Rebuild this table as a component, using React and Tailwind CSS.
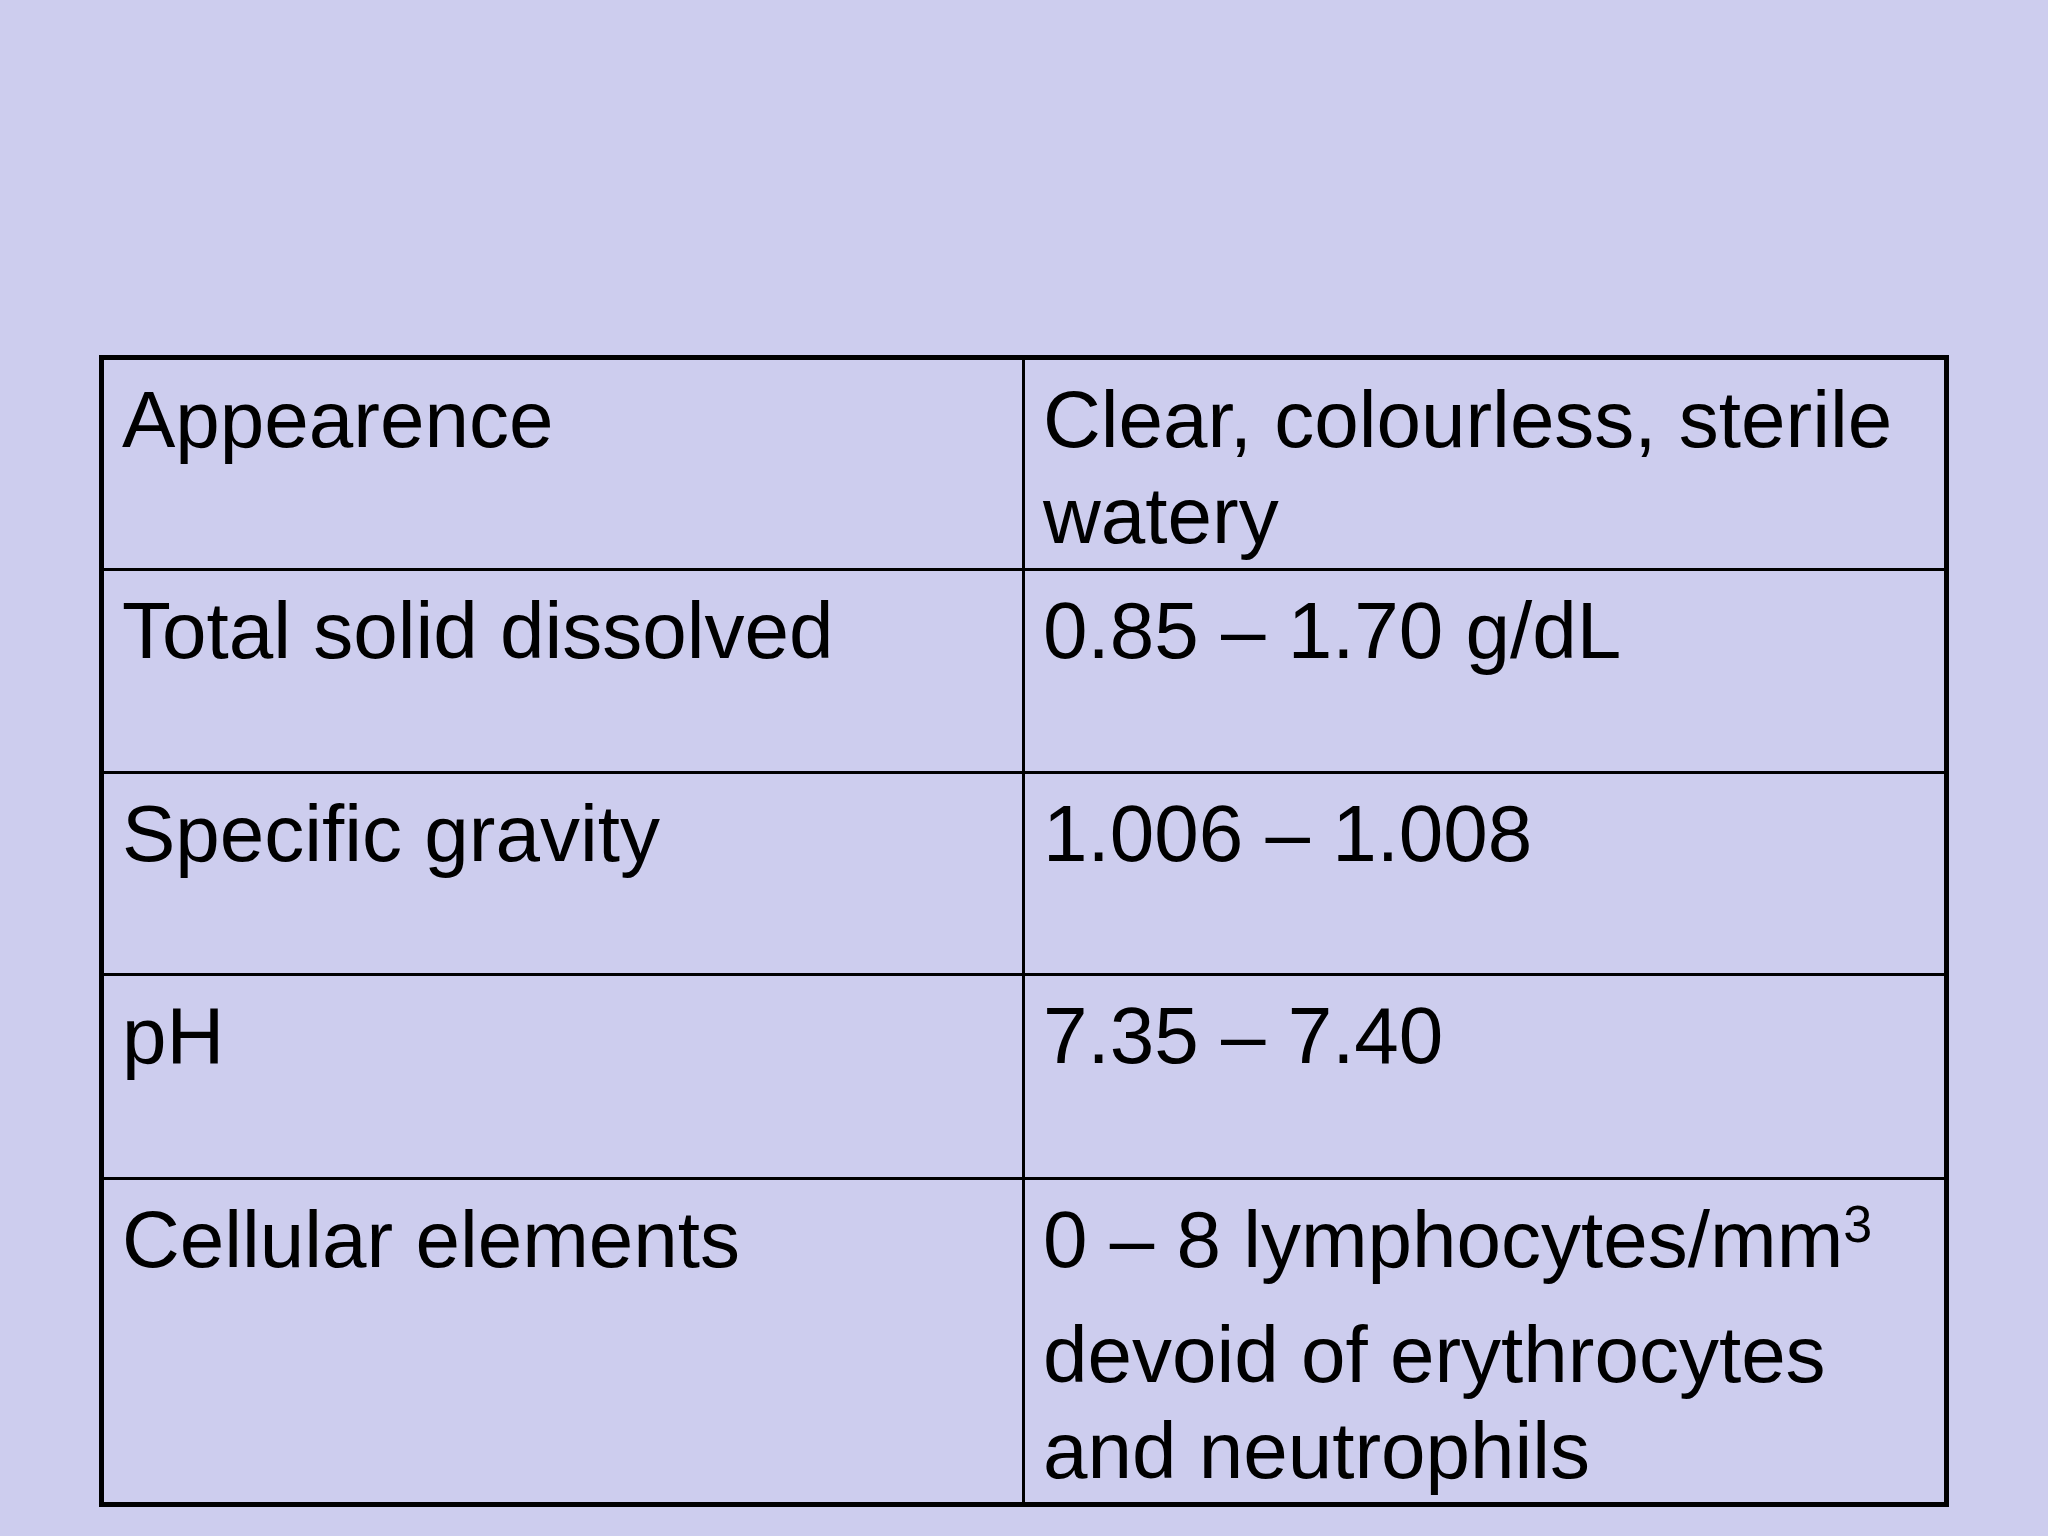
export default function App() {
  const font = { fontFamily: '"Liberation Sans", Arial, sans-serif' };
  const cell = "pl-[18px] pr-[16px] pt-[12px] text-[80px] leading-[96px] text-black";
  return (
    <div className="w-[2048px] h-[1536px] bg-[#cdcdee] pt-[355px] pl-[99px]" style={font}>
      <div className="w-[1850px] h-[1152px] border-[5px] border-black flex flex-col">
        <div className="flex h-[211px] border-b-[3px] border-black">
          <div className={`w-[921px] border-r-[3px] border-black ${cell}`}>Appearence</div>
          <div className={`flex-1 ${cell}`}>Clear, colourless, sterile watery</div>
        </div>
        <div className="flex h-[203px] border-b-[3px] border-black">
          <div className={`w-[921px] border-r-[3px] border-black ${cell}`}>Total solid dissolved</div>
          <div className={`flex-1 ${cell}`}>0.85 – 1.70 g/dL</div>
        </div>
        <div className="flex h-[202px] border-b-[3px] border-black">
          <div className={`w-[921px] border-r-[3px] border-black ${cell}`}>Specific gravity</div>
          <div className={`flex-1 ${cell}`}>1.006 – 1.008</div>
        </div>
        <div className="flex h-[204px] border-b-[3px] border-black">
          <div className={`w-[921px] border-r-[3px] border-black ${cell}`}>pH</div>
          <div className={`flex-1 ${cell}`}>7.35 – 7.40</div>
        </div>
        <div className="flex flex-1">
          <div className={`w-[921px] border-r-[3px] border-black ${cell}`}>Cellular elements</div>
          <div className={`flex-1 ${cell}`}>
            <p>
              0 – 8 lymphocytes/mm
              <span className="text-[52px] leading-none align-[25px]">3</span>
            </p>
            <p className="mt-[19px]">devoid of erythrocytes and neutrophils</p>
          </div>
        </div>
      </div>
    </div>
  );
}
